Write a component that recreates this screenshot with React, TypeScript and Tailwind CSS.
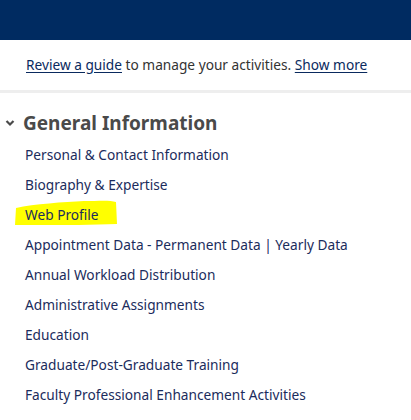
import React from "react";

const items = [
  "Personal & Contact Information",
  "Biography & Expertise",
  "Web Profile",
  "Appointment Data - Permanent Data | Yearly Data",
  "Annual Workload Distribution",
  "Administrative Assignments",
  "Education",
  "Graduate/Post-Graduate Training",
  "Faculty Professional Enhancement Activities",
];

export default function App() {
  return (
    <div className="w-[411px] h-[420px] overflow-hidden bg-white" style={{ fontFamily: '"Noto Sans", "Open Sans", sans-serif' }}>
      <div className="h-[40px] bg-[#002b61]" />
      <div className="h-[50px] flex items-center pl-[26px] text-[13.7px] text-[#333333]">
        <span>
          <a className="underline text-[#0a2a5e] underline-offset-2">Review a guide</a> to manage your activities.{" "}
          <a className="underline text-[#0a2a5e] underline-offset-2">Show more</a>
        </span>
      </div>
      <div className="h-[3px] bg-[#eeeeee]" />
      <div className="pt-[16px]">
        <div className="flex items-center h-[28px]">
          <svg className="ml-[5px] mr-[8px]" width="10" height="8" viewBox="0 0 10 8">
            <path d="M1.5 2 L5 5.5 L8.5 2" fill="none" stroke="#4a4a4a" strokeWidth="2.2" />
          </svg>
          <h2 className="text-[19px] font-bold text-[#4a4a4a] leading-none">General Information</h2>
        </div>
        <ul className="pt-[3px]">
          {items.map((t) => (
            <li key={t} className="relative h-[30px] flex items-center pl-[25px] text-[13.7px] text-[#1b2c5c]">
              {t === "Web Profile" && (
                <svg className="absolute left-[14px] top-[0px]" width="104" height="26" viewBox="0 0 104 26">
                  <path d="M2 8 C20 4 50 2 70 1 C85 1 96 0 102 2 L103 24 C80 25 50 25 20 25 L1 25 Z" fill="#ffff00" />
                </svg>
              )}
              <span className="relative">{t}</span>
            </li>
          ))}
        </ul>
      </div>
    </div>
  );
}
